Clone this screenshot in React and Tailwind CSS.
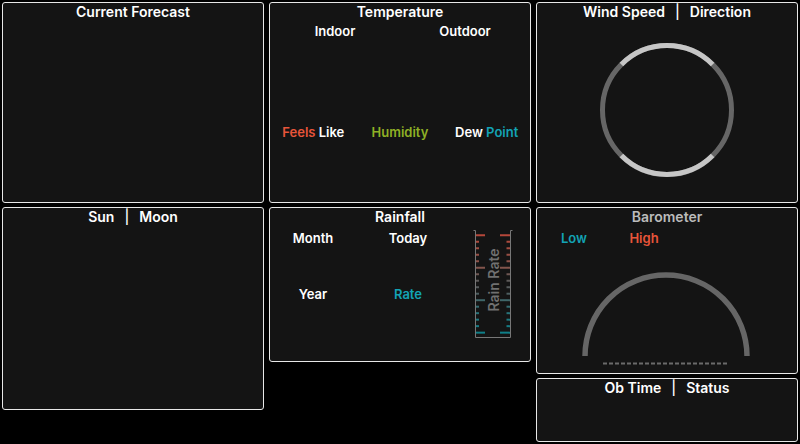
import React from 'react'

const tickColors = [
  '#b5473a', '#ab4a3d', '#a14d41', '#974f45', '#8d5249', '#83554c', '#6e5753', '#5d5a59',
  '#555a5b', '#4d5e60', '#3f6669', '#336d72', '#28737a', '#1e7880', '#167c85', '#0f7f88',
]

const Panel = ({ className = '', children }) => (
  <div className={`border border-[#e8e8e8] rounded-[3px] bg-[#141414] overflow-hidden ${className}`}>
    {children}
  </div>
)

const Title = ({ children, className = 'text-white' }) => (
  <div className={`text-center text-[14px] font-semibold leading-[18px] ${className}`}>{children}</div>
)

const Sep = () => <span className="mx-[10px] font-medium">|</span>

// Wind direction ring
const WindRing = () => (
  <svg width="140" height="140" viewBox="0 0 140 140">
    <circle cx="70" cy="70" r="64.5" fill="none" stroke="#666666" strokeWidth="5" />
    <path d="M24.4 24.4 A64.5 64.5 0 0 1 115.6 24.4" fill="none" stroke="#c6c6c6" strokeWidth="5" />
    <path d="M115.6 115.6 A64.5 64.5 0 0 1 24.4 115.6" fill="none" stroke="#c6c6c6" strokeWidth="5" />
  </svg>
)

// Rain rate tube with ticks
const RainGauge = () => (
  <svg width="44" height="110" viewBox="0 0 44 110">
    <path d="M1.5 0.5 H3.5 V107.5 H38.5 V0.5 H40.5" fill="none" stroke="#777777" strokeWidth="1" />
    {tickColors.map((c, i) => {
      const y = 5.3 + i * 6.49
      const major = i % 5 === 0
      return (
        <g key={i}>
          <line x1="4" x2={major ? 13 : 7} y1={y} y2={y} stroke={c} strokeWidth="2" />
          <line x1={major ? 28 : 34.5} x2="38" y1={y} y2={y} stroke={c} strokeWidth="2" />
        </g>
      )
    })}
    <text
      x="21.5"
      y="50"
      transform="rotate(-90 21.5 50)"
      textAnchor="middle"
      dominantBaseline="central"
      fill="#707070"
      fontSize="14"
      fontWeight="600"
      fontFamily="Inter, sans-serif"
    >
      Rain Rate
    </text>
  </svg>
)

// Barometer half dial
const BaroDial = () => (
  <svg width="180" height="102" viewBox="0 0 180 102">
    <path d="M8 91 A81 81 0 0 1 170 91" fill="none" stroke="#666666" strokeWidth="5.5" />
    <line x1="26" x2="150" y1="98.5" y2="98.5" stroke="#6a6a6a" strokeWidth="2" strokeDasharray="4 2" />
  </svg>
)

export default function App() {
  return (
    <div className="w-full h-screen bg-black p-[2px] grid grid-cols-3 gap-[5px] items-start font-['Inter',sans-serif] text-white">
      {/* column 1 */}
      <div className="flex flex-col gap-[4px]">
        <Panel className="h-[201px]">
          <Title>Current Forecast</Title>
        </Panel>
        <Panel className="h-[203px]">
          <Title>Sun<Sep />Moon</Title>
        </Panel>
      </div>

      {/* column 2 */}
      <div className="flex flex-col gap-[4px]">
        <Panel className="h-[201px]">
          <Title>Temperature</Title>
          <div className="grid grid-cols-2 mt-[2px] text-[13px] font-semibold leading-[16px] text-center">
            <div>Indoor</div>
            <div>Outdoor</div>
          </div>
          <div className="grid grid-cols-3 mt-[85px] text-[13px] font-semibold leading-[16px] text-center">
            <div><span className="text-[#e8553a]">Feels</span> Like</div>
            <div className="text-[#8fb025]">Humidity</div>
            <div>Dew <span className="text-[#13a3b5]">Point</span></div>
          </div>
        </Panel>
        <Panel className="h-[155px]">
          <Title>Rainfall</Title>
          <div className="flex mt-[4px] items-start">
            <div className="w-[202px] grid grid-cols-[86px_104px] gap-y-[40px] text-[13px] font-semibold leading-[16px] text-center">
              <div>Month</div>
              <div>Today</div>
              <div>Year</div>
              <div className="text-[#13a3b5]">Rate</div>
            </div>
            <RainGauge />
          </div>
        </Panel>
      </div>

      {/* column 3 */}
      <div className="flex flex-col gap-[4px]">
        <Panel className="h-[201px]">
          <Title>Wind Speed<Sep />Direction</Title>
          <div className="flex justify-center mt-[19px]">
            <WindRing />
          </div>
        </Panel>
        <Panel className="h-[167px]">
          <Title className="text-[#bbbbbb]">Barometer</Title>
          <div className="flex mt-[4px] pl-[2px] text-[13px] font-semibold leading-[16px] text-center">
            <div className="w-[70px] text-[#13a3b5]">Low</div>
            <div className="w-[70px] text-[#e8553a]">High</div>
          </div>
          <div className="flex justify-center mt-[19px]">
            <BaroDial />
          </div>
        </Panel>
        <Panel className="h-[64px]">
          <Title>Ob Time<Sep />Status</Title>
        </Panel>
      </div>
    </div>
  )
}
